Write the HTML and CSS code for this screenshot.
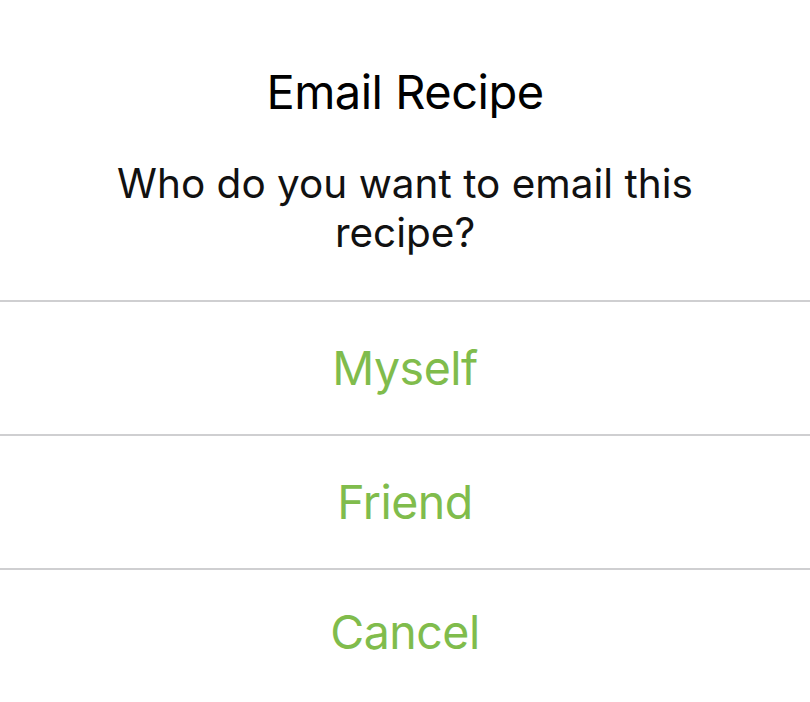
FILE: index.html
```html
<!DOCTYPE html>
<html>
<head>
<meta charset="utf-8">
<link rel="stylesheet" href="styles.css">
</head>
<body>
<div class="alert">
  <div class="header">
    <h1 class="title">Email Recipe</h1>
    <p class="message">Who do you want to email this recipe?</p>
  </div>
  <div class="actions">
    <div class="action">Myself</div>
    <div class="action">Friend</div>
    <div class="action">Cancel</div>
  </div>
</div>
</body>
</html>
```
FILE: styles.css
```css
html, body {
  margin: 0;
  padding: 0;
  background: #ffffff;
}
body {
  width: 810px;
  height: 702px;
  overflow: hidden;
  font-family: Inter, "Noto Sans", sans-serif;
}
.alert {
  display: flex;
  flex-direction: column;
}
.header {
  height: 300px;
  box-sizing: border-box;
  padding: 62px 90px 0;
  text-align: center;
}
.title {
  margin: 0;
  font-size: 47px;
  font-weight: 400;
  line-height: 60px;
  color: #000;
  letter-spacing: -0.5px;
}
.message {
  margin: 37px 0 0;
  font-size: 40.5px;
  line-height: 49px;
  color: #111;
  font-weight: 400;
}
.actions {
  display: flex;
  flex-direction: column;
}
.action {
  height: 132px;
  border-top: 2px solid #cfcfd1;
  display: flex;
  align-items: center;
  justify-content: center;
  font-size: 46.5px;
  color: #80bc4c;
  letter-spacing: -0.5px;
}
.action:last-child {
  height: 124px;
  padding-bottom: 8px;
}
```
